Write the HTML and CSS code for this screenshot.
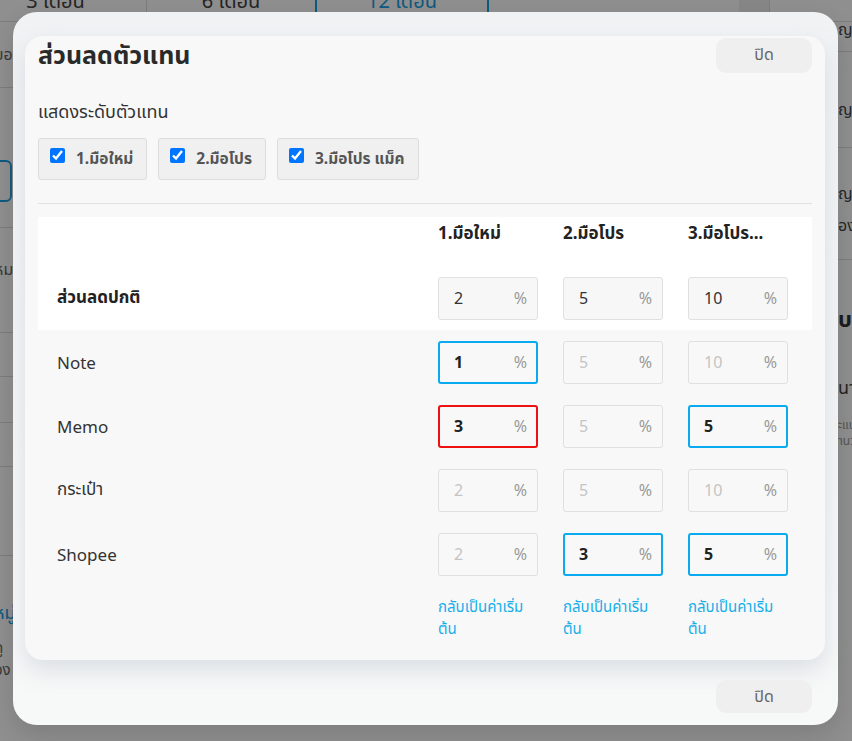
FILE: index.html
```html
<!DOCTYPE html>
<html lang="th">
<head>
<meta charset="utf-8">
<title>ส่วนลดตัวแทน</title>
<link rel="stylesheet" href="styles.css">
</head>
<body>
<div class="bg-page">
  <div class="bg-tabs">
    <div class="bg-tab t1">3 เดือน</div>
    <div class="bg-tab t2">6 เดือน</div>
    <div class="bg-tab t3 active">12 เดือน</div>
    <div class="bg-tab t4"></div>
    <div class="bg-tab t5"></div>
  </div>
  <div class="bg-body">
    <div class="bg-left">
      <div class="bl r1">ยอดขาย</div>
      <div class="bl r2"><span class="bl-box"></span></div>
      <div class="bl r3">หมวด</div>
      <div class="bl r4"></div>
      <div class="bl r5"></div>
      <div class="bl r6"></div>
      <div class="bl r7"></div>
      <div class="bl r8 blue">หมู่</div>
      <div class="bl r9">ดู<br>อง</div>
    </div>
    <div class="bg-right">
      <div class="br q1">ญาติ</div>
      <div class="br q2">ญาติ</div>
      <div class="br q3">ญาติ<br>องค์</div>
      <div class="br q4 bold">บท</div>
      <div class="br q5">นาน</div>
      <div class="br q6">ะแนน<br>ำนวน</div>
    </div>
  </div>
</div>

<div class="overlay">
  <div class="modal">
    <div class="card">
      <div class="card-head">
        <h2 class="title">ส่วนลดตัวแทน</h2>
        <button class="btn-close">ปิด</button>
      </div>
      <div class="section-label">แสดงระดับตัวแทน</div>
      <div class="filters">
        <label class="filter"><input type="checkbox" checked><span>1.มือใหม่</span></label>
        <label class="filter"><input type="checkbox" checked><span>2.มือโปร</span></label>
        <label class="filter"><input type="checkbox" checked><span>3.มือโปร แม็ค</span></label>
      </div>
      <div class="divider"></div>

      <div class="grid head-block">
        <div class="cell"></div>
        <div class="cell th">1.มือใหม่</div>
        <div class="cell th">2.มือโปร</div>
        <div class="cell th">3.มือโปร...</div>

        <div class="cell label strong">ส่วนลดปกติ</div>
        <div class="cell"><div class="pct base"><span class="v">2</span><span class="u">%</span></div></div>
        <div class="cell"><div class="pct base"><span class="v">5</span><span class="u">%</span></div></div>
        <div class="cell"><div class="pct base"><span class="v">10</span><span class="u">%</span></div></div>
      </div>

      <div class="grid rows">
        <div class="cell label">Note</div>
        <div class="cell"><div class="pct set"><span class="v">1</span><span class="u">%</span></div></div>
        <div class="cell"><div class="pct"><span class="v">5</span><span class="u">%</span></div></div>
        <div class="cell"><div class="pct"><span class="v">10</span><span class="u">%</span></div></div>

        <div class="cell label">Memo</div>
        <div class="cell"><div class="pct set error"><span class="v">3</span><span class="u">%</span></div></div>
        <div class="cell"><div class="pct"><span class="v">5</span><span class="u">%</span></div></div>
        <div class="cell"><div class="pct set"><span class="v">5</span><span class="u">%</span></div></div>

        <div class="cell label">กระเป๋า</div>
        <div class="cell"><div class="pct"><span class="v">2</span><span class="u">%</span></div></div>
        <div class="cell"><div class="pct"><span class="v">5</span><span class="u">%</span></div></div>
        <div class="cell"><div class="pct"><span class="v">10</span><span class="u">%</span></div></div>

        <div class="cell label">Shopee</div>
        <div class="cell"><div class="pct"><span class="v">2</span><span class="u">%</span></div></div>
        <div class="cell"><div class="pct set"><span class="v">3</span><span class="u">%</span></div></div>
        <div class="cell"><div class="pct set"><span class="v">5</span><span class="u">%</span></div></div>

        <div class="cell"></div>
        <div class="cell link-cell"><a class="reset">กลับเป็นค่าเริ่มต้น</a></div>
        <div class="cell link-cell"><a class="reset">กลับเป็นค่าเริ่มต้น</a></div>
        <div class="cell link-cell"><a class="reset">กลับเป็นค่าเริ่มต้น</a></div>
      </div>
    </div>
    <div class="modal-foot">
      <button class="btn-close foot">ปิด</button>
    </div>
  </div>
</div>
</body>
</html>
```

FILE: styles.css
```css
* { box-sizing: border-box; }
html, body { margin: 0; padding: 0; }
body {
  width: 852px;
  height: 741px;
  overflow: hidden;
  font-family: "Noto Sans", "Noto Sans Thai", "DejaVu Sans", sans-serif;
  color: #333;
  background: #fff;
}

/* ---------- background page (dimmed) ---------- */
.bg-page {
  position: fixed;
  inset: 0;
  background: #fff;
  overflow: hidden;
}
.bg-tabs {
  display: flex;
  height: 40px;
  margin-top: -18px;
  border-bottom: 1px solid #ddd;
}
.bg-tab {
  font-size: 20px;
  color: #444;
  display: flex;
  align-items: center;
  justify-content: center;
  border-right: 1px solid #ddd;
}
.bg-tab.t1 { width: 147px; padding-right: 35px; }
.bg-tab.t2 { width: 169px; }
.bg-tab.t3 { width: 174px; border-left: 2px solid #1aa0e6; border-right: 2px solid #1aa0e6; color: #1aa0e6; margin-left: -1px; }
.bg-tab.t4 { width: 250px; border-right: none; }
.bg-tab.t5 { width: 31px; background: #f0f0f0; }

.bg-body {
  display: flex;
  justify-content: space-between;
}
.bg-left { width: 140px; margin-left: -6px; }
.bl {
  font-size: 16px;
  color: #666;
  border-bottom: 1px solid #ddd;
  display: flex;
  align-items: center;
}
.bl.r1 { height: 66px; }
.bl.r2 { height: 140px; padding-top: 46px; }
.bl-box { display: block; width: 18px; height: 42px; border: 2px solid #1aa0e6; border-radius: 6px; }
.bl.r3 { height: 105px; padding-bottom: 20px; }
.bl.r4 { height: 44px; }
.bl.r5 { height: 46px; }
.bl.r6 { height: 44px; }
.bl.r7 { height: 89px; }
.bl.r8 { height: 80px; padding-top: 44px; border-bottom: none; color: #1aa0e6; font-size: 18px; align-items: flex-start; }
.bl.r9 { height: 60px; padding-top: 0; border-bottom: none; line-height: 22px; font-size: 15px; align-items: flex-start; }

.bg-right { width: 140px; margin-right: -126px; }
.br {
  font-size: 16px;
  color: #444;
  border-bottom: 1px solid #ddd;
  display: flex;
  align-items: center;
}
.br.q1 { height: 30px; padding-bottom: 14px; }
.br.q2 { height: 96px; padding-top: 20px; }
.br.q3 { height: 112px; padding-top: 10px; line-height: 32px; }
.br.q4 { height: 100px; padding-top: 20px; font-size: 22px; font-weight: 700; border-bottom: none; color: #333; }
.br.q5 { height: 56px; font-size: 18px; border-bottom: none; }
.br.q6 { height: 34px; font-size: 12px; line-height: 16px; color: #999; border-bottom: none; }

/* ---------- overlay + modal ---------- */
.overlay {
  position: fixed;
  inset: 0;
  background: rgba(0, 0, 0, 0.44);
  display: flex;
  justify-content: flex-start;
  align-items: flex-start;
  padding: 12px 0 0 13px;
}
.modal {
  width: 825px;
  height: 713px;
  border-radius: 24px;
  background: linear-gradient(#f1f2f4 0, #f4f5f6 60%, #f7f8f8 100%);
  padding: 24px 13px 12px 12px;
  box-shadow: 0 10px 24px rgba(0, 0, 0, 0.12);
  display: flex;
  flex-direction: column;
}
.card {
  background: #f8f8f8;
  border-radius: 18px;
  padding: 0 13px 10px 13px;
  box-shadow: 0 10px 22px rgba(150, 165, 180, 0.28);
}
.card-head {
  display: flex;
  justify-content: space-between;
  align-items: center;
  height: 37px;
}
.title {
  margin: 0;
  font-size: 25px;
  font-weight: 700;
  color: #2a2a2a;
  line-height: 36px;
  margin-top: -2px;
}
.btn-close {
  font-family: inherit;
  border: none;
  background: #efefef;
  color: #666;
  width: 96px;
  height: 35px;
  border-radius: 10px;
  font-size: 16px;
  margin-top: 1px;
}
.section-label {
  margin-top: 25px;
  font-size: 18px;
  line-height: 26px;
  color: #333;
}
.filters {
  display: flex;
  gap: 11px;
  margin-top: 14px;
}
.filter {
  display: flex;
  align-items: center;
  gap: 11px;
  height: 42px;
  padding: 0 13px 0 11px;
  background: #f0f0f0;
  border: 1px solid #dcdcdc;
  border-radius: 3px;
  font-size: 15.5px;
  font-weight: 700;
  color: #555;
}
.filter input {
  width: 15px;
  height: 15px;
  margin: 0 0 8px 0;
  accent-color: #0075ff;
}
.divider {
  height: 1px;
  background: #dfe3e6;
  margin-top: 23px;
}

.grid {
  display: grid;
  grid-template-columns: 400px 125px 125px 124px;
}
.head-block {
  background: #fff;
  margin-top: 13px;
  grid-template-rows: 49px 64px;
}
.cell {
  display: flex;
  align-items: center;
}
.th {
  align-items: flex-start;
  padding-top: 4px;
  font-size: 17px;
  font-weight: 700;
  color: #222;
}
.label {
  padding-left: 19px;
  font-size: 17px;
  color: #333;
}
.label.strong { font-weight: 700; color: #222; }
.rows { grid-auto-rows: 64px; }
.rows .link-cell {
  align-items: flex-start;
  padding-top: 9px;
}

.pct {
  width: 100px;
  height: 43px;
  border: 1px solid #e0e0e0;
  border-radius: 3px;
  background: #f8f8f8;
  display: flex;
  align-items: center;
  justify-content: space-between;
  padding: 0 10px 0 15px;
  font-size: 16px;
}
.pct .v { color: #c4c4c4; }
.pct .u { color: #9a9a9a; }
.pct.base { background: #f7f7f7; }
.pct.base .v { color: #333; }
.pct.set { border: 2px solid #0aaaf0; padding: 0 9px 0 14px; }
.pct.set .v { color: #222; font-weight: 700; }
.pct.error { border-color: #ee1111; }

.reset {
  display: block;
  width: 100px;
  font-size: 15px;
  line-height: 22px;
  color: #17aee8;
}

.modal-foot {
  display: flex;
  justify-content: flex-end;
  padding: 20px 13px 0 0;
}
.btn-close.foot { height: 33px; margin-top: 0; }
```
